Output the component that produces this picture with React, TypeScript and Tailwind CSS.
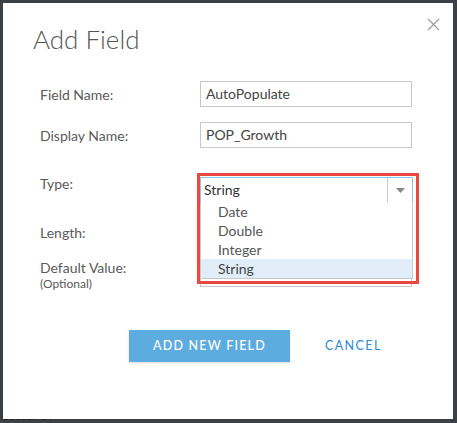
import { X } from "lucide-react";

const labelCls = "w-[197px] shrink-0 pl-[37px] text-[14px] text-[#5a5a5a]";
const inputCls =
  "h-[26px] w-[212px] border border-[#c8c8c8] bg-white px-[5px] text-[14px] leading-[24px] text-[#444]";

const typeOptions = ["Date", "Double", "Integer", "String"];

function FieldRow({ label, value, className }: { label: string; value: string; className: string }) {
  return (
    <div className={"flex items-center " + className}>
      <div className={labelCls}>{label}</div>
      <div className={inputCls}>{value}</div>
    </div>
  );
}

export default function App() {
  return (
    <div
      className="relative h-[423px] w-[457px] overflow-hidden bg-[#3c4047]"
      style={{ fontFamily: "Lato, 'Open Sans', sans-serif" }}
    >
      <div className="absolute bottom-0 left-[2px] text-[13px] leading-[16px] text-[#222]">ected: 67</div>

      <div className="relative ml-[3px] mt-[3px] h-[416px] w-[450px] bg-white">
        <button className="absolute right-[9px] top-[11px] text-[#999]">
          <X className="h-[21px] w-[21px]" strokeWidth={1.3} />
        </button>

        <h1 className="pl-[30px] pt-[20px] text-[26px] font-light leading-[33px] text-[#555]">Add Field</h1>

        <FieldRow label="Field Name:" value="AutoPopulate" className="mt-[25px]" />
        <FieldRow label="Display Name:" value="POP_Growth" className="mt-[15px]" />

        <div className="mt-[29px] flex items-start">
          <div className={labelCls + " -mt-[4px]"}>Type:</div>
          <div className="relative h-[26px] w-[213px]">
            <div className="flex h-[26px] items-stretch border border-[#8cc3ea] bg-white">
              <div className="flex-1 pl-[3px] text-[14px] leading-[24px] text-[#333]">String</div>
              <div className="flex w-[25px] items-center justify-center border-l border-[#ccc]">
                <svg width="9" height="5" viewBox="0 0 9 5">
                  <path d="M0 0h9L4.5 5z" fill="#888" />
                </svg>
              </div>
            </div>
            <div className="absolute left-0 right-0 top-[25px] z-10 border border-t-0 border-[#c8c8c8] bg-white">
              {typeOptions.map((opt) => (
                <div
                  key={opt}
                  className={
                    "h-[19px] pl-[17px] text-[14px] leading-[19px] " +
                    (opt === "String" ? "bg-[#e1eef9] text-[#444]" : "text-[#555]")
                  }
                >
                  {opt}
                </div>
              ))}
            </div>
            <div className="absolute left-[-3px] right-[-6px] top-[-4px] z-20 h-[111px] border-[3px] border-[#e8483f]" />
          </div>
        </div>

        <div className="mt-[18px] flex items-start">
          <div className={labelCls + " pt-[1px]"}>Length:</div>
          <div className={inputCls} />
        </div>

        <div className="mt-[14px] flex items-start">
          <div className={labelCls + " -mt-[2px]"}>
            <div className="leading-[17px]">Default Value:</div>
            <div className="text-[12px] leading-[16px]">(Optional)</div>
          </div>
          <div className={inputCls} />
        </div>

        <div className="mt-[38px] flex items-center">
          <button className="ml-[126px] h-[32px] w-[161px] bg-[#5dacdf] text-[12.5px] font-medium tracking-[1.2px] text-white shadow-[0_1px_2px_rgba(0,0,0,0.15)]">
            ADD NEW FIELD
          </button>
          <button className="ml-[35px] text-[12.5px] tracking-[1.4px] text-[#2d8bd6]">CANCEL</button>
        </div>
      </div>
    </div>
  );
}
